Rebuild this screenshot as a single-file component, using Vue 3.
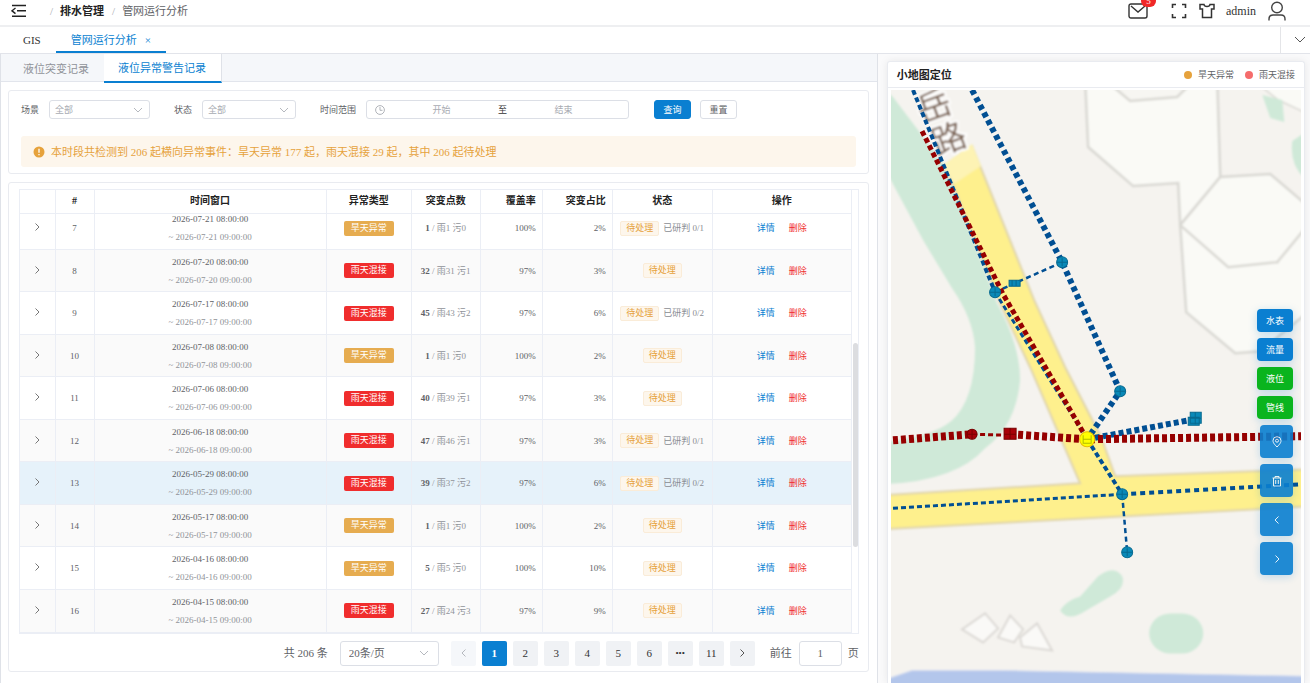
<script setup>
import { ref } from 'vue'

const scene = ref('全部')
const status = ref('全部')
const start = ref('')
const end = ref('')
const pageSize = ref('20条/页')
const jump = ref('1')
const pages = ['1', '2', '3', '4', '5', '6', '•••', '11']

const make = (id, date, dry, total, rain, sewage, cover, share, judged = '') => ({
  id, date, dry, total, rain, sewage, cover, share, judged
})
const rows = [
  make(7, '2026-07-21', true, 1, 1, 0, '100%', '2%', '已研判 0/1'),
  make(8, '2026-07-20', false, 32, 31, 1, '97%', '3%'),
  make(9, '2026-07-17', false, 45, 43, 2, '97%', '6%', '已研判 0/2'),
  make(10, '2026-07-08', true, 1, 1, 0, '100%', '2%'),
  make(11, '2026-07-06', false, 40, 39, 1, '97%', '3%'),
  make(12, '2026-06-18', false, 47, 46, 1, '97%', '3%', '已研判 0/1'),
  make(13, '2026-05-29', false, 39, 37, 2, '97%', '6%', '已研判 0/2'),
  make(14, '2026-05-17', true, 1, 1, 0, '100%', '2%'),
  make(15, '2026-04-16', true, 5, 5, 0, '100%', '10%'),
  make(16, '2026-04-15', false, 27, 24, 3, '97%', '9%')
]
const layers = [
  { name: '水表', on: false },
  { name: '流量', on: false },
  { name: '液位', on: true },
  { name: '管线', on: true }
]
const nodes = [[995, 292], [1062, 262], [1120, 391], [1122, 494], [1127, 552]]
</script>

<template>
  <div class="app">
    <header class="topbar">
      <button class="bare" aria-label="折叠菜单">
        <svg width="16" height="14" viewBox="0 0 16 14" fill="none" stroke="#222" stroke-width="1.4">
          <path d="M1 1.5h14M6 6.8h9M1 12.3h14M4.5 4 1 6.8l3.5 2.8" />
        </svg>
      </button>
      <nav class="crumbs">
        <i>/</i><b>排水管理</b><i>/</i><span>管网运行分析</span>
      </nav>
      <div class="tools">
        <button class="bare mail" aria-label="消息">
          <svg width="20" height="16" viewBox="0 0 20 16" fill="none" stroke="#333" stroke-width="1.4">
            <rect x="1" y="1" width="18" height="14" rx="2" /><path d="m3 3 7 6 7-6" />
          </svg>
          <span class="badge">5</span>
        </button>
        <button class="bare" aria-label="全屏">
          <svg width="16" height="16" viewBox="0 0 16 16" fill="none" stroke="#333" stroke-width="1.6">
            <path d="M1.5 5V1.5H5M11 1.5h3.500V5M14.500 11v3.500H11M5 14.500H1.500V11" />
          </svg>
        </button>
        <button class="bare" aria-label="主题">
          <svg width="16" height="16" viewBox="0 0 16 16" fill="none" stroke="#333" stroke-width="1.5">
            <path d="M1 1.500h4c.4 2.600 5.600 2.600 6 0h4V6h-2.500v8.500h-9V6H1z" />
          </svg>
        </button>
        <span class="user">admin</span>
        <button class="bare" aria-label="用户">
          <svg width="18" height="20" viewBox="0 0 18 20" fill="none" stroke="#444" stroke-width="1.4">
            <circle cx="9" cy="6.500" r="5.300" /><path d="M1 19.500v-1.500q0-4 4-4h8q4 0 4 4v1.500" />
          </svg>
        </button>
      </div>
    </header>

    <nav class="views">
      <a href="#gis">GIS</a>
      <a href="#analysis" class="current">管网运行分析<span class="x">×</span></a>
      <button class="bare more" aria-label="更多标签">
        <svg width="12" height="8" viewBox="0 0 12 8" fill="none" stroke="#555"><path d="m1 1 5 5 5-5" /></svg>
      </button>
    </nav>

    <main class="body">
      <section class="left">
        <div class="subtabs">
          <button>液位突变记录</button>
          <button class="active">液位异常警告记录</button>
        </div>

        <div class="card filters">
          <form class="form" @submit.prevent>
            <label for="scene">场景</label>
            <span class="select scene">
              <select id="scene" v-model="scene"><option>全部</option></select>
              <svg width="10" height="6" viewBox="0 0 10 6" fill="none" stroke="#b5b8be"><path d="m1 1 4 4 4-4" /></svg>
            </span>
            <label for="status">状态</label>
            <span class="select status">
              <select id="status" v-model="status"><option>全部</option></select>
              <svg width="10" height="6" viewBox="0 0 10 6" fill="none" stroke="#b5b8be"><path d="m1 1 4 4 4-4" /></svg>
            </span>
            <label for="start">时间范围</label>
            <span class="range">
              <svg width="10" height="10" viewBox="0 0 10 10" fill="none" stroke="#b0b3b9"><circle cx="5" cy="5" r="4.400" /><path d="M5 2v3.300h2.500" /></svg>
              <input id="start" v-model="start" placeholder="开始">
              <span>至</span>
              <input v-model="end" placeholder="结束" aria-label="结束">
            </span>
            <button class="btn primary" type="submit">查询</button>
            <button class="btn" type="reset">重置</button>
          </form>
          <p class="alert">
            <svg width="12" height="12" viewBox="0 0 12 12"><circle cx="6" cy="6" r="5.500" fill="#e6a23c" /><path d="M6 2.700v4M6 8v1.300" stroke="#fff" stroke-width="1.300" /></svg>
            本时段共检测到 206 起横向异常事件：旱天异常 177 起，雨天混接 29 起，其中 206 起待处理
          </p>
        </div>

        <div class="card records">
          <div class="grid">
            <table>
              <colgroup><col class="c1"><col class="c2"><col><col class="c4"><col class="c5"><col class="c6"><col class="c7"><col class="c8"><col class="c9"></colgroup>
              <thead>
                <tr>
                  <th></th><th>#</th><th>时间窗口</th><th>异常类型</th><th>突变点数</th>
                  <th class="num">覆盖率</th><th class="num">突变占比</th><th>状态</th><th>操作</th>
                </tr>
              </thead>
            </table>
            <div class="scroll">
              <table class="data">
                <colgroup><col class="c1"><col class="c2"><col><col class="c4"><col class="c5"><col class="c6"><col class="c7"><col class="c8"><col class="c9"></colgroup>
                <tbody>
                  <tr v-for="r in rows" :key="r.id" :class="{ hover: r.id === 13 }">
                    <td>
                      <button class="bare" :aria-label="'展开 ' + r.id">
                        <svg width="5" height="8" viewBox="0 0 5 8" fill="none" stroke="#777"><path d="m.5.5 3.500 3.500L.5 7.500" /></svg>
                      </button>
                    </td>
                    <td>{{ r.id }}</td>
                    <td><div class="from">{{ r.date }} 08:00:00</div><div class="to">~ {{ r.date }} 09:00:00</div></td>
                    <td><span class="tag" :class="r.dry ? 'dry' : 'wet'">{{ r.dry ? '旱天异常' : '雨天混接' }}</span></td>
                    <td class="points"><b>{{ r.total }}</b> / 雨{{ r.rain }} 污{{ r.sewage }}</td>
                    <td class="num">{{ r.cover }}</td>
                    <td class="num">{{ r.share }}</td>
                    <td class="state"><span class="tag wait">待处理</span><span v-if="r.judged" class="judged">{{ r.judged }}</span></td>
                    <td><a href="#detail">详情</a><a href="#remove" class="danger">删除</a></td>
                  </tr>
                </tbody>
              </table>
              <span class="thumb"></span>
            </div>
          </div>

          <div class="pager">
            <span class="total">共 206 条</span>
            <span class="select size">
              <select v-model="pageSize" aria-label="每页条数"><option>20条/页</option></select>
              <svg width="10" height="6" viewBox="0 0 10 6" fill="none" stroke="#b5b8be"><path d="m1 1 4 4 4-4" /></svg>
            </span>
            <div class="pages">
              <button disabled aria-label="上一页"><svg width="5" height="8" viewBox="0 0 5 8" fill="none" stroke="#b5b8be"><path d="M4.500.5 1 4l3.500 3.500" /></svg></button>
              <button v-for="p in pages" :key="p" :class="{ active: p === '1', dots: p === '•••' }">{{ p }}</button>
              <button aria-label="下一页"><svg width="5" height="8" viewBox="0 0 5 8" fill="none" stroke="#555"><path d="m.5.5 3.500 3.500L.5 7.500" /></svg></button>
            </div>
            <label for="jump">前往</label>
            <input id="jump" v-model="jump">
            <span>页</span>
          </div>
        </div>
      </section>

      <aside class="right">
        <div class="mapcard">
          <div class="maphead">
            <h2>小地图定位</h2>
            <span class="dot orange"></span><span>旱天异常</span>
            <span class="dot pink"></span><span>雨天混接</span>
          </div>
          <div class="map">
            <svg class="canvas" viewBox="891 90 410 593" preserveAspectRatio="xMinYMin slice">
              <defs>
                <filter id="soft"><feGaussianBlur stdDeviation="1" /></filter>
              </defs>
              <rect x="891" y="90" width="410" height="593" fill="#f5f3ef" />
              <g filter="url(#soft)">
                <path d="M880 85 893 97 943 163 997 303Q1020 345 1020 380 1016 425 985 448 955 482 880 484V442Q930 438 951 421 975 400 975 347 973 318 952 288L923 240 880 160Z" fill="#cfe9d8" />
                <g fill="#fafaf6" stroke="#d9d8d3" stroke-width="2.500">
                  <path d="M1085 80 1088 147 1133 186 1178 183 1180 225 1220 177 1217 80Z" />
                  <path d="M1110 84 1130 101 1177 97 1190 84" fill="#f7f6f2" />
                  <path d="M1180 225 1186 312 1235 353 1260 351 1310 310V190L1277 262Z" />
                  <path d="m1180 225 40-48 50-3 40 34v14l-33 40-49 5Z" />
                  <path d="m1258 84 20 16 30 14V80Z" stroke-width="1.500" />
                </g>
                <path d="m1262 95 20 5 2 22-14-4zm30 46 12-8v45q-15-14-12-37M1060 610q6-10 20-14l18-20q16-12 24 0 4 12-12 20l-24 14q-18 12-26 0" fill="#cfe9d8" />
                <rect x="1149" y="613" width="54" height="40" rx="21" fill="#cfe9d8" />
                <path d="m945 165 27-19 62 154 31 67 36 70 14 39 195-7v37l-430 23v-34l200-12-50-116-30-64Z" fill="#fef08d" stroke="#dfd4ab" stroke-width="2" />
                <path d="m943 165 29-21 9 22-27 18Z" fill="#fdf3b4" />
                <path d="m880 681 32-11h88l310 6v14H880Z" fill="#b3c6eb" stroke="#d5dcef" />
                <g fill="#faf9f7" stroke="#dcd9d5" stroke-width="2">
                  <path d="m962 629 23-16 13 15-15 14Z" /><path d="m998 637 12-22 13 14-9 13Z" /><path d="m1020 637 17-14 15 27-30-4Z" />
                </g>
              </g>
              <g filter="url(#soft)" class="road" fill="#79604f" stroke="#fff" stroke-width="4" paint-order="stroke">
                <text transform="translate(922 123) rotate(-20)">岳</text>
                <text transform="translate(937 156) rotate(-20)">路</text>
              </g>

              <g fill="none" stroke="#014f93">
                <path d="m972 90 90 172 58 129-33 48" stroke-width="6" stroke-dasharray="5 3.500" />
                <path d="m913 90 82 202" stroke-width="4" stroke-dasharray="5 3" />
                <path d="m995 292 92 147" stroke-width="3" stroke-dasharray="5 3" />
                <path d="m995 292 67-30" stroke-width="2.500" stroke-dasharray="5 3.500" />
                <path d="m1087 439 107-20" stroke-width="6" stroke-dasharray="5 3" />
                <path d="m1087 439 35 55" stroke-width="4" stroke-dasharray="5 3" />
                <path d="m1122 494 5 58" stroke-width="2.500" stroke-dasharray="5 3.500" />
                <path d="m893 508 229-14" stroke-width="3" stroke-dasharray="5 3" />
                <path d="m1122 494 179-10" stroke-width="4" stroke-dasharray="5 4" />
              </g>
              <g fill="none" stroke="#960000">
                <path d="m922 131 81 163 84 145" stroke-width="5" stroke-dasharray="5 3" />
                <path d="m893 440 79-6m38 0 77 5 214-3" stroke-width="8" stroke-dasharray="5 3" />
                <path d="m972 434 38 1" stroke-width="3" stroke-dasharray="5 3" />
              </g>
              <g stroke="#07698f">
                <g v-for="n in nodes" :key="n.join()">
                  <circle :cx="n[0]" :cy="n[1]" r="5.500" fill="#0989b8" />
                  <path :d="`M${n[0] - 5} ${n[1]}h10M${n[0]} ${n[1] - 4}v8`" />
                </g>
                <path d="M1009 280h11v6h-11zM1012 280v6M1016 280v6M1188 417h11v8h-11zM1190 412h11v11h-11zM1195 412v12M1190 418h11" fill="#0989b8" />
              </g>
              <g fill="#a90008" stroke="#780000">
                <circle cx="972" cy="434" r="5" /><path d="M967 434h10M972 429v10M1004 428h12v11h-12zM1010 428v11M1004 434h12" />
              </g>
              <circle cx="1087" cy="439" r="7.500" fill="#ff0" stroke="#e9bd00" />
              <path d="M1083 435v8h8v-8m-8 4h8" fill="none" stroke="#b0bc00" />
            </svg>
            <div class="layers">
              <button v-for="l in layers" :key="l.name" class="layer" :class="{ on: l.on }">{{ l.name }}</button>
              <button class="act" aria-label="定位"><svg width="12" height="12" viewBox="0 0 12 12" fill="none" stroke="#fff" stroke-width=".9"><path d="M6 11C2.500 7.500 2 6 2 4.700a4 4 0 0 1 8 0C10 6 9.500 7.500 6 11" /><circle cx="6" cy="4.700" r="1.500" /></svg></button>
              <button class="act" aria-label="清除"><svg width="12" height="12" viewBox="0 0 12 12" fill="none" stroke="#fff" stroke-width=".9"><path d="M1.500 3h9M4 3V1.500h4V3M2.500 3v8h7V3M4.700 5v4M7.300 5v4" /></svg></button>
              <button class="act" aria-label="向左"><svg width="12" height="12" viewBox="0 0 12 12" fill="none" stroke="#fff" stroke-width=".9"><path d="M7.500 2.500 4 6l3.500 3.500" /></svg></button>
              <button class="act" aria-label="向右"><svg width="12" height="12" viewBox="0 0 12 12" fill="none" stroke="#fff" stroke-width=".9"><path d="M4.500 2.500 8 6 4.500 9.500" /></svg></button>
            </div>
          </div>
        </div>
      </aside>
    </main>
  </div>
</template>

<style>
body { margin: 0; overflow: hidden; }
</style>

<style scoped>
* { box-sizing: border-box; }
.app {
  height: 100vh; display: flex; flex-direction: column; overflow: hidden;
  font: 9px/14px "Liberation Serif", "Noto Sans CJK SC", serif; color: #606266; background: #fff;
}
button, input, select { font: inherit; color: inherit; margin: 0; }
button { cursor: pointer; padding: 0; }
a { color: #0a7fd1; text-decoration: none; }
svg { flex: none; }
.bare { border: 0; background: none; display: inline-flex; align-items: center; }

.topbar { height: 27px; flex: none; display: flex; align-items: center; padding: 0 24px 4px 11px; border-bottom: 2px solid #eeeff1; overflow: hidden; }
.crumbs { display: flex; margin-left: 23px; font-size: 11px; }
.crumbs i { color: #a8abb2; font-style: normal; margin-right: 7px; }
.crumbs b { color: #222; margin-right: 8px; }
.tools { margin-left: auto; display: flex; align-items: center; color: #333; }
.tools > * { margin-left: 12px; }
.tools .mail { position: relative; margin-right: 11px; }
.badge { position: absolute; left: 13px; top: -8px; width: 15px; height: 12px; border-radius: 6px; background: #f02828; color: #fff; font-size: 9px; line-height: 12px; text-align: center; }
.tools .user { font-size: 12px; margin-left: 11px; }

.views { height: 27px; flex: none; display: flex; border-bottom: 1px solid #e2e4ea; font-size: 11px; line-height: 26px; }
.views a { color: #333; padding: 0 15px 0 23px; }
.views .current { color: #0a7fd1; padding: 0 15px; border-bottom: 2px solid #0a7fd1; }
.x { margin-left: 8px; }
.more { margin-left: auto; width: 30px; padding-left: 13px; border-left: 1px solid #e4e5e8; }

.body { flex: 1; min-height: 0; display: grid; grid-template-columns: minmax(0, 67fr) minmax(0, 33fr); }
.left { border: solid #dfe2e8; border-width: 0 1px; display: flex; flex-direction: column; }
.subtabs { height: 28px; flex: none; display: flex; background: #f5f7fa; border-bottom: 1px solid #e2e5ec; }
.subtabs button { height: 29px; border: 0; background: none; color: #909399; font-size: 11px; padding: 0 15px 0 22px; }
.subtabs .active { background: #fff; color: #0a7fd1; padding: 0 15px 0 14px; border-bottom: 2px solid #0a7fd1; border-right: 1px solid #dfe2e8; }

.card { border: 1px solid #e9ebf0; border-radius: 3px; background: #fff; margin: 8px 8px 0 7px; }
.filters { padding: 9px 12px 6px; }
.form { display: flex; align-items: center; height: 19px; }
.form label { margin-right: 10px; }
.select { position: relative; display: inline-flex; align-items: center; height: 19px; border: 1px solid #dcdfe6; border-radius: 3px; }
.select select { appearance: none; border: 0; outline: 0; background: none; width: 100%; height: 100%; padding: 0 5px; color: #a8abb2; }
.select svg { position: absolute; right: 6px; }
.scene { width: 101px; margin-right: 24px; }
.status { width: 94px; margin-right: 24px; }
.range { width: 263px; height: 19px; display: flex; align-items: center; border: 1px solid #dcdfe6; border-radius: 3px; padding: 0 8px; margin-right: 25px; color: #333; }
.range input { flex: 1; min-width: 0; border: 0; outline: 0; background: none; text-align: center; padding: 0; }
.range input::placeholder { color: #a8abb2; }
.btn { height: 19px; width: 37px; border: 1px solid #dcdfe6; border-radius: 3px; background: #fff; margin-right: 9px; }
.primary { background: #0a7fd1; border-color: #0a7fd1; color: #fff; }
.alert { margin: 17px 0 0; height: 31px; display: flex; align-items: center; gap: 6px; padding-left: 12px; background: #fdf6ec; border-radius: 3px; color: #e6a23c; font-size: 11px; }

.records { padding: 6px 9px 5px 10px; }
.grid { border: 1px solid #ebeef5; }
table { width: calc(100% - 6px); table-layout: fixed; border-collapse: collapse; }
.c1 { width: 35px; } .c2 { width: 39px; } .c4 { width: 85px; } .c5 { width: 69px; }
.c6 { width: 62px; } .c7 { width: 70px; } .c8 { width: 100px; } .c9 { width: 139px; }
th, td { padding: 0; text-align: center; border: 1px solid #ebeef5; border-width: 0 1px 1px 0; }
th { height: 23px; font-size: 10px; color: #222; }
.num { text-align: right; padding-right: 6px; }
.scroll { position: relative; height: 419px; overflow: hidden; display: flex; flex-direction: column; justify-content: flex-end; }
.data { height: 425px; flex: none; }
tr:nth-child(even) { background: #fafafa; }
tr.hover { background: #e6f2fa; }
.from, .to { line-height: 18px; }
.to { color: #909399; }
.tag { display: inline-block; height: 15px; line-height: 15px; padding: 0 7px; border-radius: 2px; color: #fff; vertical-align: middle; }
.dry { background: #e6ac50; }
.wet { background: #f02d2d; }
.wait { background: #fdf6ec; color: #e6a23c; border: 1px solid #faecd8; line-height: 13px; padding: 0 5px; }
.points { color: #909399; }
.points b { color: #606266; }
.judged { margin-left: 4px; color: #8a8d93; vertical-align: middle; }
.state { white-space: nowrap; }
td a { margin: 0 7px; }
.danger { color: #f02d2d; }
.thumb { position: absolute; right: 0; bottom: 86px; width: 5px; height: 204px; border-radius: 3px; background: #dcdde0; }

.pager { display: flex; align-items: center; justify-content: flex-end; margin-top: 7px; height: 25px; font-size: 11px; }
.size { width: 99px; height: 25px; margin: 0 12px; }
.size select { padding: 0 8px; color: #606266; }
.size svg { right: 9px; }
.pages { display: flex; gap: 6px; margin-right: 15px; }
.pages button { width: 25px; height: 25px; border: 0; border-radius: 2px; background: #f0f2f5; color: #333; display: flex; align-items: center; justify-content: center; }
.pages button:disabled { background: #f5f7fa; }
.pages .active { background: #0a7fd1; color: #fff; font-weight: bold; }
.pages .dots { font-size: 9px; }
.pager input { width: 43px; height: 25px; border: 1px solid #dcdfe6; border-radius: 3px; text-align: center; margin: 0 6px 0 7px; padding: 0; }

.right { padding: 7px 5px 0 9px; background: #fafafb; min-height: 0; }
.mapcard { height: 100%; display: flex; flex-direction: column; background: #fff; border: 1px solid #e9ebf0; border-bottom: 0; border-radius: 3px 3px 0 0; box-shadow: 0 0 8px rgba(0, 0, 0, .08); }
.maphead { height: 26px; flex: none; display: flex; align-items: center; padding: 0 9px; border-bottom: 1px solid #e9ebf0; }
h2 { margin: 0 auto 0 0; font-size: 11px; line-height: 14px; color: #222; }
.dot { width: 8px; height: 8px; border-radius: 50%; margin: 0 6px 0 11px; }
.orange { background: #e6a23c; }
.pink { background: #f56c6c; }
.map { position: relative; flex: 1; min-height: 0; margin: 2px 3px 0; }
.canvas { display: block; width: 100%; height: 100%; }
.road { font: 34px "Noto Sans CJK SC", sans-serif; }
.layers { position: absolute; right: 8px; top: 219px; display: flex; flex-direction: column; align-items: flex-end; gap: 6px; }
.layers button { border: 0; border-radius: 4px; color: #fff; background: #0a7fd1; box-shadow: 0 2px 8px rgba(10, 127, 209, .25); }
.layer { width: 36px; height: 23px; }
.layers .on { background: #0ab41e; }
.layers .act { width: 33px; height: 33px; opacity: .9; display: flex; align-items: center; justify-content: center; }
</style>
